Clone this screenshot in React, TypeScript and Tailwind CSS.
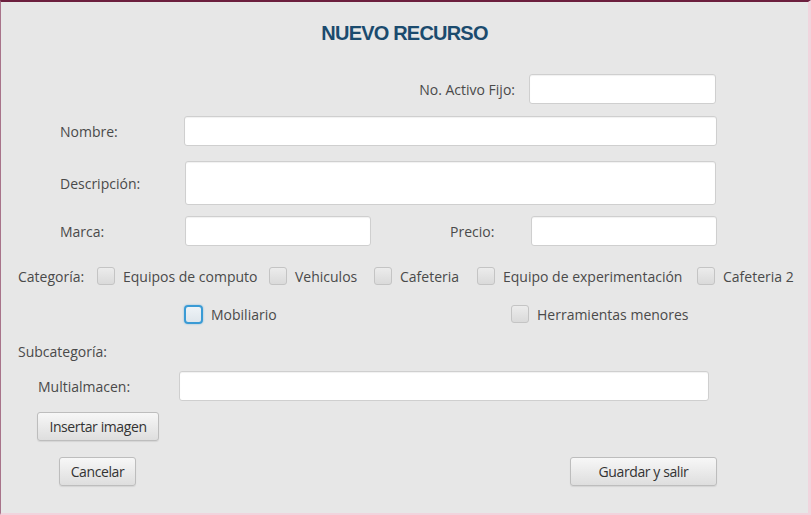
const font = { fontFamily: '"Open Sans", "Liberation Sans", sans-serif' }

function Input({ className = '' }: { className?: string }) {
  return (
    <div
      className={`bg-white border border-[#cfcfcf] rounded-[3px] shadow-[inset_0_1px_1px_rgba(0,0,0,0.06)] ${className}`}
    />
  )
}

function Check({ focused = false }: { focused?: boolean }) {
  return focused ? (
    <span className="w-[19px] h-[19px] rounded-[4px] border-2 border-[#3a9bd5] bg-gradient-to-b from-[#eef3f7] to-[#dfe6ec] shadow-[0_0_2px_rgba(58,155,213,0.6)] shrink-0" />
  ) : (
    <span className="w-[18px] h-[18px] rounded-[3px] border border-[#c4c4c4] bg-gradient-to-b from-[#ececec] to-[#dadada] shrink-0" />
  )
}

function Button({ label, className = '' }: { label: string; className?: string }) {
  return (
    <button
      className={`h-[29px] rounded-[3px] border border-[#bdbdbd] bg-gradient-to-b from-[#f7f7f7] to-[#dedede] text-[14px] text-[#333] tracking-[-0.4px] shadow-[0_1px_1px_rgba(0,0,0,0.08)] ${className}`}
    >
      {label}
    </button>
  )
}

export default function App() {
  const cats = [
    { label: 'Equipos de computo', w: 'w-[172px]' },
    { label: 'Vehiculos', w: 'w-[105px]' },
    { label: 'Cafeteria', w: 'w-[103px]' },
    { label: 'Equipo de experimentación', w: 'w-[220px]' },
    { label: 'Cafeteria 2', w: '' },
  ]

  return (
    <div
      style={font}
      className="w-[811px] h-[515px] bg-[#e7e7e7] border-t-2 border-t-[#6c1f3e] border-l border-l-[#a8738a] border-r-[3px] border-r-[#f2d3dd] border-b-2 border-b-[#f2d3dd] flex flex-col text-[14px] text-[#4a4a4a] overflow-hidden"
    >
      {/* Title */}
      <div className="pt-[20px] h-[42px] flex justify-center">
        <h1
          className="text-[20px] leading-[22px] font-bold text-[#1b4b6e] tracking-[-0.8px]"
          style={{ fontFamily: '"Liberation Sans", Arial, sans-serif' }}
        >
          NUEVO RECURSO
        </h1>
      </div>

      {/* No. Activo Fijo */}
      <div className="mt-[30px] h-[30px] flex items-center justify-end pr-[92px]">
        <span className="mr-[14px]">No. Activo Fijo:</span>
        <Input className="w-[187px] h-[30px]" />
      </div>

      {/* Nombre */}
      <div className="mt-[12px] h-[30px] flex items-center pl-[59px]">
        <span className="w-[124px]">Nombre:</span>
        <Input className="w-[533px] h-[30px]" />
      </div>

      {/* Descripción */}
      <div className="mt-[15px] h-[44px] flex items-center pl-[59px]">
        <span className="w-[125px]">Descripción:</span>
        <Input className="w-[531px] h-[44px]" />
      </div>

      {/* Marca / Precio */}
      <div className="mt-[11px] h-[30px] flex items-center pl-[59px]">
        <span className="w-[125px]">Marca:</span>
        <Input className="w-[186px] h-[30px]" />
        <span className="ml-[79px] w-[81px]">Precio:</span>
        <Input className="w-[186px] h-[30px]" />
      </div>

      {/* Categoría */}
      <div className="mt-[20px] h-[20px] flex items-center pl-[17px]">
        <span className="w-[79px]">Categoría:</span>
        {cats.map((c) => (
          <div key={c.label} className={`flex items-center gap-[8px] ${c.w}`}>
            <Check />
            <span className="whitespace-nowrap">{c.label}</span>
          </div>
        ))}
      </div>

      <div className="mt-[18px] h-[20px] flex items-center pl-[183px]">
        <div className="flex items-center gap-[8px] w-[327px]">
          <Check focused />
          <span>Mobiliario</span>
        </div>
        <div className="flex items-center gap-[8px]">
          <Check />
          <span>Herramientas menores</span>
        </div>
      </div>

      {/* Subcategoría */}
      <div className="mt-[17px] h-[20px] flex items-center pl-[17px]">
        <span>Subcategoría:</span>
      </div>

      {/* Multialmacen */}
      <div className="mt-[10px] h-[30px] flex items-center pl-[37px]">
        <span className="w-[141px]">Multialmacen:</span>
        <Input className="w-[530px] h-[30px]" />
      </div>

      {/* Insertar imagen */}
      <div className="mt-[11px] flex pl-[36px]">
        <Button label="Insertar imagen" className="w-[122px]" />
      </div>

      {/* Actions */}
      <div className="mt-[16px] flex pl-[58px]">
        <Button label="Cancelar" className="w-[77px]" />
        <Button label="Guardar y salir" className="w-[147px] ml-[434px]" />
      </div>
    </div>
  )
}
